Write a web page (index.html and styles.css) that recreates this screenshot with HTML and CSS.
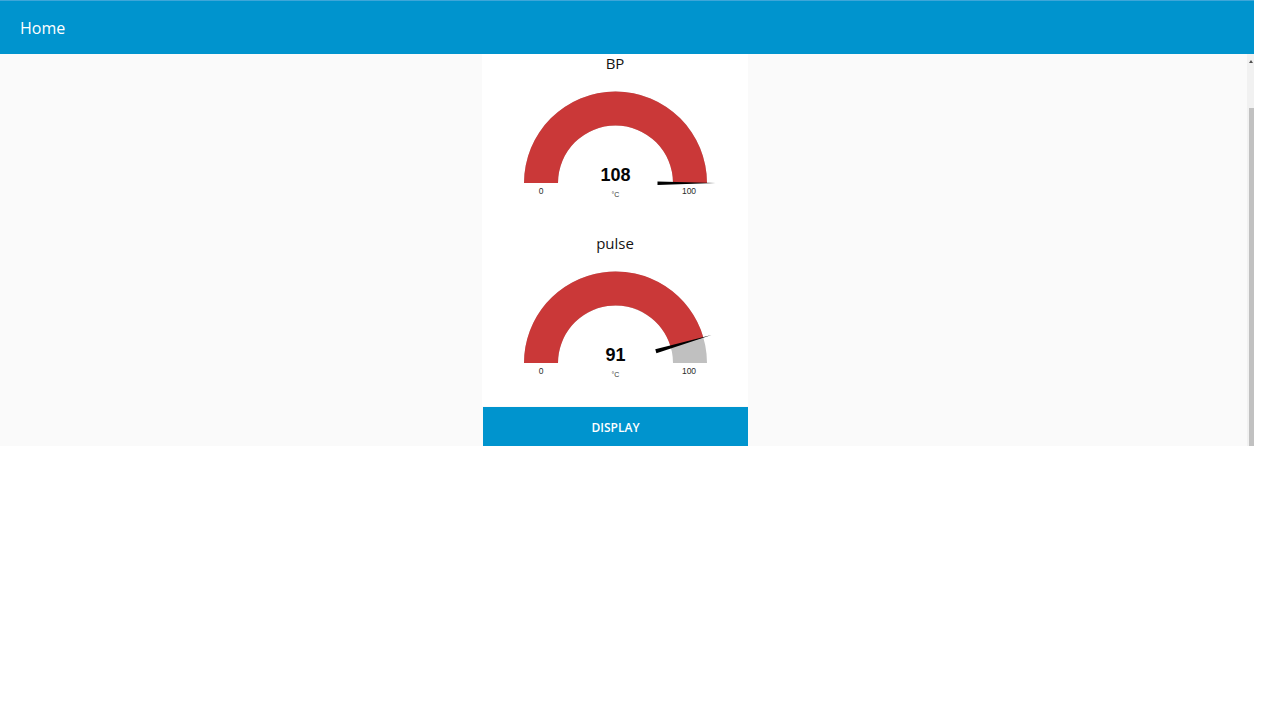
FILE: index.html
```html
<!DOCTYPE html>
<html>
<head>
<meta charset="utf-8">
<title>Home</title>
<link rel="stylesheet" href="styles.css">
</head>
<body>
<div class="shot">
  <header class="topbar"><span class="title">Home</span></header>
  <div class="body">
    <main class="content">
      <div class="column">
        <section class="group">
          <div class="widget">
            <div class="widget-title">BP</div>
            <svg class="gauge" width="266" height="154" viewBox="0 0 266 154">
              <path class="arc-bg" d="M42 111 A91.5 91.5 0 0 1 225 111 L191 111 A57.5 57.5 0 0 0 76 111 Z"/>
              <path class="arc-val" d="M42 111 A91.5 91.5 0 0 1 225 111 L191 111 A57.5 57.5 0 0 0 76 111 Z"/>
              <polygon class="needle" points="175.5,109.5 175.5,113 233.5,111"/>
              <text class="value" x="133.5" y="109">108</text>
              <text class="unit" x="133.5" y="125">°C</text>
              <text class="limit" x="59" y="122">0</text>
              <text class="limit" x="207" y="122">100</text>
            </svg>
          </div>
          <div class="widget">
            <div class="widget-title">pulse</div>
            <svg class="gauge" width="266" height="154" viewBox="0 0 266 154">
              <path class="arc-bg" d="M42 111 A91.5 91.5 0 0 1 225 111 L191 111 A57.5 57.5 0 0 0 76 111 Z"/>
              <path class="arc-val" d="M42 111 A91.5 91.5 0 0 1 221.37 85.47 L188.72 94.96 A57.5 57.5 0 0 0 76 111 Z"/>
              <polygon class="needle" points="174.39,101.2 173.27,97.36 229.53,83.1"/>
              <text class="value" x="133.5" y="109">91</text>
              <text class="unit" x="133.5" y="125">°C</text>
              <text class="limit" x="59" y="122">0</text>
              <text class="limit" x="207" y="122">100</text>
            </svg>
          </div>
        </section>
        <button class="action">DISPLAY</button>
      </div>
    </main>
    <div class="scrollbar">
      <div class="scroll-arrow"></div>
      <div class="scroll-thumb"></div>
    </div>
  </div>
</div>
</body>
</html>
```
FILE: styles.css
```css
html, body {
  margin: 0;
  padding: 0;
  background: #ffffff;
}

.shot {
  width: 1254px;
  height: 446px;
  overflow: hidden;
  display: flex;
  flex-direction: column;
  font-family: "Open Sans", "Noto Sans", sans-serif;
}

.topbar {
  height: 53px;
  flex: 0 0 53px;
  background: #0094ce;
  border-top: 1px solid #3ea6d9;
  display: flex;
  align-items: center;
  padding-left: 20px;
}

.title {
  color: #ffffff;
  font-size: 16px;
  line-height: 20px;
  margin-top: 1px;
}

.body {
  flex: 1;
  display: flex;
  min-height: 0;
}

.content {
  flex: 1;
  background: #fafafa;
  padding-left: 482px;
}

.column {
  width: 266px;
  display: flex;
  flex-direction: column;
}

.group {
  background: #ffffff;
  height: 352px;
  display: flex;
  flex-direction: column;
  gap: 8px;
}

.widget {
  height: 172px;
  display: flex;
  flex-direction: column;
}

.widget-title {
  height: 18px;
  line-height: 18px;
  text-align: center;
  font-size: 15px;
  font-weight: 500;
  color: #141414;
}

.gauge {
  display: block;
}

.arc-bg {
  fill: #c0c0c0;
}

.arc-val {
  fill: #ca3838;
}

.needle {
  fill: #000000;
}

.value {
  font-family: "Liberation Sans", Arial, sans-serif;
  font-weight: bold;
  font-size: 18px;
  fill: #050505;
  text-anchor: middle;
}

.unit {
  font-family: "Liberation Sans", Arial, sans-serif;
  font-size: 7px;
  fill: #333333;
  text-anchor: middle;
}

.limit {
  font-family: "Liberation Sans", Arial, sans-serif;
  font-size: 8.5px;
  fill: #2a2a2a;
  text-anchor: middle;
}

.action {
  margin: 1px 0 0 1px;
  height: 40px;
  border: none;
  background: #0094ce;
  color: #ffffff;
  font-family: "Open Sans", "Noto Sans", sans-serif;
  font-weight: 600;
  font-size: 12px;
  padding: 0;
}

.scrollbar {
  width: 7px;
  background: #f1f1f1;
  display: flex;
  flex-direction: column;
  align-items: flex-end;
}

.scroll-arrow {
  margin-top: 6px;
  margin-right: 1px;
  width: 0;
  height: 0;
  border-left: 2px solid transparent;
  border-right: 2px solid transparent;
  border-bottom: 3px solid #505050;
}

.scroll-thumb {
  margin-top: 45px;
  width: 5px;
  flex: 1;
  background: #c1c1c1;
}
```
